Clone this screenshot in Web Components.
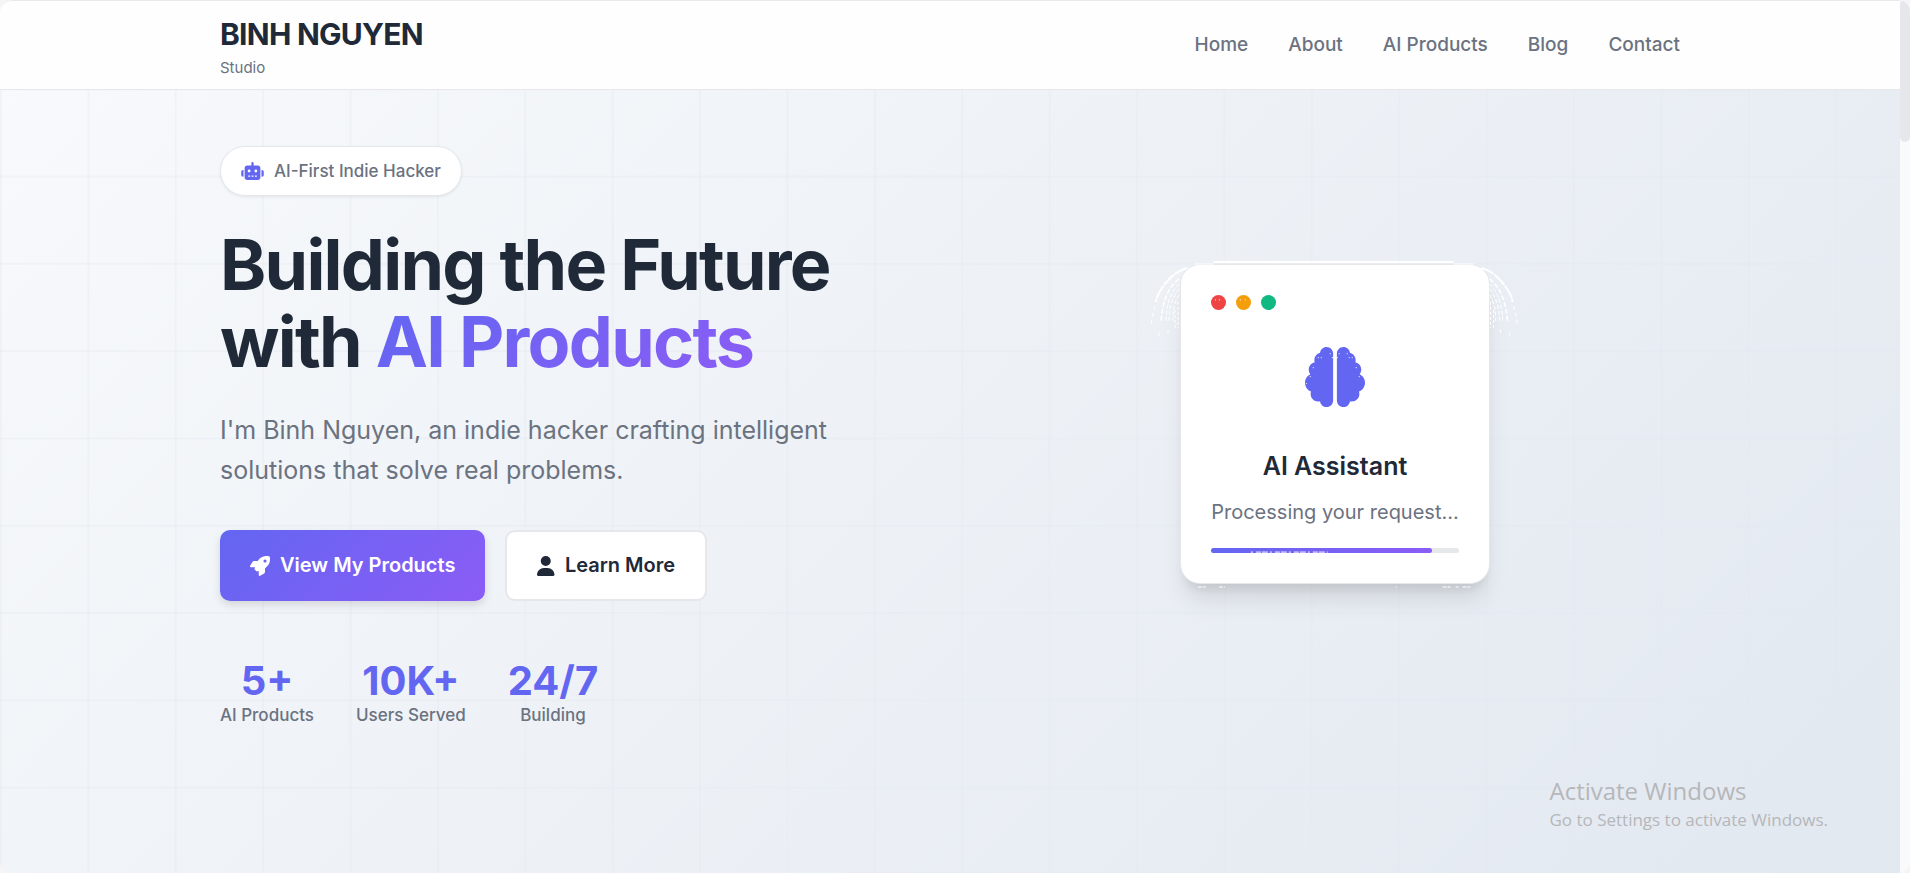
<!DOCTYPE html>
<html lang="en">
<head>
<meta charset="UTF-8">
<meta name="viewport" content="width=device-width, initial-scale=1.0">
<title>Binh Nguyen Studio</title>
<style>
  body {
    margin: 0;
    font-family: Inter, "Liberation Sans", sans-serif;
    color: #1f2937;
    background: #f5f5f5;
    overflow: hidden;
  }
</style>
</head>
<body>
<site-page>
  <site-header slot="header">
    <nav-link href="#home">Home</nav-link>
    <nav-link href="#about">About</nav-link>
    <nav-link href="#products">AI Products</nav-link>
    <nav-link href="#blog">Blog</nav-link>
    <nav-link href="#contact">Contact</nav-link>
  </site-header>
  <hero-section>
    <hero-badge icon="robot">AI-First Indie Hacker</hero-badge>
    <hero-title lead="Building the Future">with <span slot="accent">AI Products</span></hero-title>
    <hero-text>I'm Binh Nguyen, an indie hacker crafting intelligent solutions that solve real problems.</hero-text>
    <hero-actions>
      <action-button icon="rocket" variant="primary">View My Products</action-button>
      <action-button icon="user" variant="secondary">Learn More</action-button>
    </hero-actions>
    <stat-list>
      <stat-item number="5+">AI Products</stat-item>
      <stat-item number="10K+">Users Served</stat-item>
      <stat-item number="24/7">Building</stat-item>
    </stat-list>
    <assistant-card slot="visual" title-text="AI Assistant" status="Processing your request..."></assistant-card>
  </hero-section>
  <system-notice slot="notice" heading="Activate Windows">Go to Settings to activate Windows.</system-notice>
</site-page>

<script>
const icons = {
  robot: `<svg viewBox="0 0 640 512"><path d="M320 0c17.700 0 32 14.300 32 32v64h120c39.800 0 72 32.200 72 72v272c0 39.800-32.200 72-72 72H168c-39.800 0-72-32.200-72-72V168c0-39.800 32.200-72 72-72h120V32c0-17.700 14.300-32 32-32zM208 384c-8.800 0-16 7.200-16 16s7.200 16 16 16h32c8.800 0 16-7.200 16-16s-7.200-16-16-16h-32zm96 0c-8.800 0-16 7.200-16 16s7.200 16 16 16h32c8.800 0 16-7.200 16-16s-7.200-16-16-16h-32zm96 0c-8.800 0-16 7.200-16 16s7.200 16 16 16h32c8.800 0 16-7.200 16-16s-7.200-16-16-16h-32zM264 256a40 40 0 1 0-80 0 40 40 0 1 0 80 0zm152 40a40 40 0 1 0 0-80 40 40 0 1 0 0 80zM48 224h16v192H48c-26.500 0-48-21.500-48-48v-96c0-26.500 21.500-48 48-48zm544 0c26.500 0 48 21.500 48 48v96c0 26.500-21.500 48-48 48h-16V224h16z"/></svg>`,
  rocket: `<svg viewBox="0 0 512 512"><path d="M156.600 384.900 125.700 354c-8.500-8.500-11.500-20.800-7.700-32.200 3-8.900 7-20.500 11.800-33.800H24c-8.600 0-16.600-4.600-20.900-12.100s-4.200-16.700.2-24.100l52.500-88.500c13-21.900 36.500-35.300 61.900-35.300h82.300c2.400-4 4.800-7.700 7.200-11.300C289.100-4.100 411.100-8.100 483.900 5.300c11.600 2.100 20.600 11.200 22.800 22.800 13.400 72.900 9.300 194.800-111.400 276.700-3.500 2.400-7.300 4.800-11.300 7.200v82.300c0 25.400-13.400 49-35.300 61.900l-88.500 52.500c-7.400 4.400-16.600 4.500-24.100.2S224 496.700 224 488V380.800c-14.100 4.900-26.400 8.900-35.700 11.900-11.200 3.600-23.400.5-31.800-7.800zM384 168a40 40 0 1 0 0-80 40 40 0 1 0 0 80z"/></svg>`,
  user: `<svg viewBox="0 0 448 512"><path d="M224 256a128 128 0 1 0 0-256 128 128 0 1 0 0 256zm-45.700 48C79.800 304 0 383.800 0 482.300 0 498.700 13.300 512 29.700 512h388.600c16.400 0 29.700-13.300 29.700-29.700C448 383.800 368.200 304 269.700 304h-91.400z"/></svg>`,
  brain: `<svg viewBox="0 0 512 512"><path d="M184 0c30.900 0 56 25.100 56 56v400c0 30.900-25.100 56-56 56-28.900 0-52.700-21.900-55.700-50.100-5.200 1.400-10.700 2.100-16.300 2.100-35.300 0-64-28.700-64-64 0-7.400 1.300-14.600 3.600-21.200C21.400 367.400 0 338.200 0 304c0-31.900 18.700-59.500 45.800-72.300C37.100 220.800 32 207 32 192c0-30.700 21.600-56.300 50.400-62.600C80.800 123.900 80 118 80 112c0-29.900 20.600-55.100 48.300-62.100C131.300 21.900 155.100 0 184 0zm144 0c28.900 0 52.600 21.900 55.700 49.900C411.500 56.900 432 82 432 112c0 6-.8 11.900-2.400 17.400C458.400 135.600 480 161.200 480 192c0 15-5.100 28.800-13.800 39.700C493.300 244.500 512 272.100 512 304c0 34.200-21.400 63.400-51.600 74.800 2.300 6.600 3.600 13.800 3.600 21.200 0 35.300-28.700 64-64 64-5.600 0-11.100-.7-16.300-2.100-3 28.200-26.800 50.100-55.700 50.100-30.900 0-56-25.100-56-56V56c0-30.900 25.100-56 56-56z"/></svg>`
};

class SitePage extends HTMLElement {
  constructor() {
    super();
    this.attachShadow({ mode: "open" });
  }

  connectedCallback() {
    this.shadowRoot.innerHTML = `
      <style>
        :host {
          display: grid;
          grid-template-columns: 1fr 10px;
          position: relative;
          min-height: 100vh;
          border-radius: 12px;
          overflow: hidden;
          background: #f9fafb;
        }

        .content {
          display: flex;
          flex-direction: column;
          background: linear-gradient(135deg, #f8fafc 0%, #e2e8f0 100%);
          position: relative;
        }

        .content::before {
          content: "";
          position: absolute;
          inset: 0;
          background-image:
            linear-gradient(90deg, #e2e8f059 2px, transparent 2px),
            linear-gradient(#e2e8f059 2px, transparent 2px);
          background-size: calc(100% * 0.046) calc(100vh / 10);
          background-position: 0 1px;
        }

        .thumb {
          height: 142px;
          border-radius: 5px;
          background: #e5e7eb;
        }

        .frame {
          position: absolute;
          inset: 0;
          border-top: 1px solid #e8e9eb;
          border-radius: 12px;
          pointer-events: none;
        }
      </style>

      <div class="content">
        <slot name="header"></slot>
        <slot></slot>
      </div>
      <div class="track"><div class="thumb"></div></div>
      <slot name="notice"></slot>
      <div class="frame"></div>
    `;
  }
}

class SiteHeader extends HTMLElement {
  constructor() {
    super();
    this.attachShadow({ mode: "open" });
  }

  connectedCallback() {
    this.shadowRoot.innerHTML = `
      <style>
        :host {
          display: block;
          position: relative;
          background: #fefefe;
          border-bottom: 1px solid #e5e7eb;
        }

        .inner {
          display: flex;
          justify-content: space-between;
          align-items: center;
          box-sizing: border-box;
          max-width: 1500px;
          height: 89px;
          margin: 0 auto;
          padding: 0 20px;
        }

        .brand {
          padding-top: 6px;
        }

        .name {
          font-size: 30px;
          line-height: 36px;
          font-weight: 700;
          letter-spacing: -0.025em;
        }

        .sub {
          font-size: 15px;
          line-height: 24px;
          color: #6b7280;
          margin-top: 4px;
        }

        nav {
          display: flex;
          gap: 40px;
        }
      </style>

      <div class="inner">
        <div class="brand">
          <div class="name">BINH NGUYEN</div>
          <div class="sub">Studio</div>
        </div>
        <nav><slot></slot></nav>
      </div>
    `;
  }
}

class NavLink extends HTMLElement {
  constructor() {
    super();
    this.attachShadow({ mode: "open" });
  }

  connectedCallback() {
    const href = this.getAttribute("href");

    this.shadowRoot.innerHTML = `
      <style>
        :host {
          display: block;
        }

        a {
          color: #6b7280;
          font-size: 19px;
          line-height: 30px;
          font-weight: 500;
          text-decoration: none;
        }
      </style>

      <a href="${href}"><slot></slot></a>
    `;
  }
}

class HeroSection extends HTMLElement {
  constructor() {
    super();
    this.attachShadow({ mode: "open" });
  }

  connectedCallback() {
    this.shadowRoot.innerHTML = `
      <style>
        :host {
          display: block;
          position: relative;
        }

        .inner {
          display: grid;
          grid-template-columns: 1fr 1fr;
          gap: 80px;
          box-sizing: border-box;
          max-width: 1500px;
          margin: 0 auto;
          padding: 56px 20px;
        }

        .text {
          display: flex;
          flex-direction: column;
          align-items: flex-start;
        }

        .visual {
          display: flex;
          justify-content: center;
          align-items: flex-start;
          padding-top: 118px;
        }
      </style>

      <div class="inner">
        <div class="text"><slot></slot></div>
        <div class="visual"><slot name="visual"></slot></div>
      </div>
    `;
  }
}

class HeroBadge extends HTMLElement {
  constructor() {
    super();
    this.attachShadow({ mode: "open" });
  }

  connectedCallback() {
    const icon = this.getAttribute("icon");

    this.shadowRoot.innerHTML = `
      <style>
        :host {
          display: flex;
          align-items: center;
          gap: 10px;
          padding: 10px 20px;
          border: 1px solid #e5e7eb;
          border-radius: 50px;
          background: #ffffff;
          box-shadow: 0 1px 3px rgba(0, 0, 0, 0.08);
          color: #6b7280;
          font-size: 17px;
          line-height: 28px;
          font-weight: 500;
        }

        svg {
          display: block;
          width: 23px;
          height: 18px;
          fill: #6366f1;
        }
      </style>

      ${icons[icon]}
      <span><slot></slot></span>
    `;
  }
}

class HeroTitle extends HTMLElement {
  constructor() {
    super();
    this.attachShadow({ mode: "open" });
  }

  connectedCallback() {
    const lead = this.getAttribute("lead");

    this.shadowRoot.innerHTML = `
      <style>
        :host {
          display: block;
          margin-top: 30px;
        }

        h1 {
          margin: 0;
          font-size: 70px;
          line-height: 77px;
          font-weight: 700;
          letter-spacing: -0.025em;
        }

        .accent {
          background: linear-gradient(135deg, #6366f1, #8b5cf6);
          -webkit-background-clip: text;
          background-clip: text;
          color: transparent;
        }
      </style>

      <h1>${lead}<br><slot></slot><span class="accent"><slot name="accent"></slot></span></h1>
    `;
  }
}

class HeroText extends HTMLElement {
  constructor() {
    super();
    this.attachShadow({ mode: "open" });
  }

  connectedCallback() {
    this.shadowRoot.innerHTML = `
      <style>
        :host {
          display: block;
          margin-top: 30px;
        }

        p {
          margin: 0;
          max-width: 625px;
          color: #6b7280;
          font-size: 25px;
          line-height: 40px;
        }
      </style>

      <p><slot></slot></p>
    `;
  }
}

class HeroActions extends HTMLElement {
  constructor() {
    super();
    this.attachShadow({ mode: "open" });
  }

  connectedCallback() {
    this.shadowRoot.innerHTML = `
      <style>
        :host {
          display: flex;
          gap: 20px;
          margin-top: 40px;
        }
      </style>

      <slot></slot>
    `;
  }
}

class ActionButton extends HTMLElement {
  constructor() {
    super();
    this.attachShadow({ mode: "open" });
  }

  connectedCallback() {
    const icon = this.getAttribute("icon");
    const variant = this.getAttribute("variant");

    this.shadowRoot.innerHTML = `
      <style>
        :host {
          display: block;
        }

        button {
          display: flex;
          align-items: center;
          gap: 10px;
          padding: 20px 30px;
          border: none;
          border-radius: 10px;
          font: inherit;
          font-size: 20px;
          line-height: 31px;
          font-weight: 600;
          cursor: pointer;
        }

        .primary {
          background: linear-gradient(135deg, #6366f1, #8b5cf6);
          color: #ffffff;
          box-shadow: 0 4px 8px rgba(0, 0, 0, 0.12);
        }

        .secondary {
          padding: 18px 30px;
          border: 2px solid #e5e7eb;
          background: #ffffff;
          color: #1f2937;
        }

        svg {
          display: block;
          height: 20px;
          fill: currentColor;
        }
      </style>

      <button type="button" class="${variant}">${icons[icon]}<span><slot></slot></span></button>
    `;
  }
}

class StatList extends HTMLElement {
  constructor() {
    super();
    this.attachShadow({ mode: "open" });
  }

  connectedCallback() {
    this.shadowRoot.innerHTML = `
      <style>
        :host {
          display: flex;
          gap: 42px;
          margin-top: 60px;
        }
      </style>

      <slot></slot>
    `;
  }
}

class StatItem extends HTMLElement {
  constructor() {
    super();
    this.attachShadow({ mode: "open" });
  }

  connectedCallback() {
    const number = this.getAttribute("number");

    this.shadowRoot.innerHTML = `
      <style>
        :host {
          display: block;
          text-align: center;
        }

        .number {
          color: #6366f1;
          font-size: 40px;
          line-height: 40px;
          font-weight: 700;
        }

        .label {
          color: #6b7280;
          font-size: 17px;
          line-height: 28px;
          font-weight: 500;
        }
      </style>

      <div class="number">${number}</div>
      <div class="label"><slot></slot></div>
    `;
  }
}

class AssistantCard extends HTMLElement {
  constructor() {
    super();
    this.attachShadow({ mode: "open" });
  }

  connectedCallback() {
    const title = this.getAttribute("title-text");
    const status = this.getAttribute("status");

    this.shadowRoot.innerHTML = `
      <style>
        :host {
          display: block;
          position: relative;
        }

        .card {
          padding: 30px;
          border: 1px solid #e5e7eb;
          border-radius: 20px;
          background: #ffffff;
          box-shadow: 0 20px 25px -5px rgba(0, 0, 0, 0.1), 0 10px 10px -5px rgba(0, 0, 0, 0.08);
          text-align: center;
        }

        .dots {
          display: flex;
          gap: 10px;
        }

        .dots span {
          width: 15px;
          height: 15px;
          border-radius: 50%;
          background: var(--dot);
        }

        .brain {
          display: flex;
          justify-content: center;
          padding: 37px 0 39px;
        }

        .brain svg {
          width: 60px;
          height: 60px;
          fill: #6366f1;
        }

        h3 {
          margin: 0;
          font-size: 25px;
          line-height: 40px;
          font-weight: 600;
        }

        p {
          margin: 10px 0 20px;
          color: #6b7280;
          font-size: 20px;
          line-height: 32px;
        }

        .bar {
          height: 5px;
          border-radius: 3px;
          background: #e5e7eb;
        }

        .fill {
          width: 89%;
          height: 5px;
          border-radius: 3px;
          background: linear-gradient(90deg, #6366f1, #8b5cf6);
        }

        .spark {
          position: absolute;
          inset: 0;
          width: 100%;
          height: 100%;
          overflow: visible;
          pointer-events: none;
          stroke: #ffffff;
          fill: none;
        }
      </style>

      <div class="card">
        <div class="dots">
          <span style="--dot: #ef4444"></span>
          <span style="--dot: #f59e0b"></span>
          <span style="--dot: #10b981"></span>
        </div>
        <div class="brain">${icons.brain}</div>
        <h3>${title}</h3>
        <p>${status}</p>
        <div class="bar"><div class="fill"></div></div>
      </div>
      <svg class="spark" viewBox="0 0 310 321" preserveAspectRatio="none">
        <g id="side">
          <path d="M7 4Q-6 8-15 20T-24 38" stroke-width="2" stroke-dasharray="14 1"/>
          <path d="M-25 42Q-28 52-29 62" stroke-dasharray="4 3"/>
          <path d="M-1 15Q-17 27-19 58" stroke-width="1.500" stroke-dasharray="5 2"/>
          <path d="M-1 20Q-14 33-14 59M-1 25Q-11 38-11 57M-1 31Q-8 42-7 57" stroke-dasharray="4 2"/>
          <path d="M-2 38V64M-5 46V66M-12 66V70M-21 69V72" stroke-dasharray="3 2"/>
        </g>
        <use href="#side" transform="matrix(-1 0 0 1 309 0)"/>
        <path d="M34-2H274" stroke-width="2"/>
        <path d="M14 0H34M274 0H294"/>
        <path d="M71 289H148" stroke-dasharray="2 3 5 1 6 2"/>
        <path d="M18 324H26M39 324H45M216 324H217M263 324H271M276 324H279M283 324H291" stroke-dasharray="4 1"/>
        <path d="M35 36H36M39 36H40M60 36H61M65 36H66M138 94H139M141 94H142M150 90H151M152 94H158M159 90H160M167 90H168M169 94H170M172 94H173M133 104H134M176 104H177M130 113H131M179 113H180M126 120H127"/>
      </svg>
    `;
  }
}

class SystemNotice extends HTMLElement {
  constructor() {
    super();
    this.attachShadow({ mode: "open" });
  }

  connectedCallback() {
    const heading = this.getAttribute("heading");

    this.shadowRoot.innerHTML = `
      <style>
        :host {
          display: block;
          position: absolute;
          right: 82px;
          bottom: 40px;
          color: #b5b7ba;
          font-family: "Open Sans", "Noto Sans", sans-serif;
          pointer-events: none;
        }

        .heading {
          font-size: 24px;
          line-height: 32px;
        }

        .detail {
          font-size: 17px;
          line-height: 26px;
        }
      </style>

      <div class="heading">${heading}</div>
      <div class="detail"><slot></slot></div>
    `;
  }
}

customElements.define("site-page", SitePage);
customElements.define("site-header", SiteHeader);
customElements.define("nav-link", NavLink);
customElements.define("hero-section", HeroSection);
customElements.define("hero-badge", HeroBadge);
customElements.define("hero-title", HeroTitle);
customElements.define("hero-text", HeroText);
customElements.define("hero-actions", HeroActions);
customElements.define("action-button", ActionButton);
customElements.define("stat-list", StatList);
customElements.define("stat-item", StatItem);
customElements.define("assistant-card", AssistantCard);
customElements.define("system-notice", SystemNotice);
</script>
</body>
</html>
